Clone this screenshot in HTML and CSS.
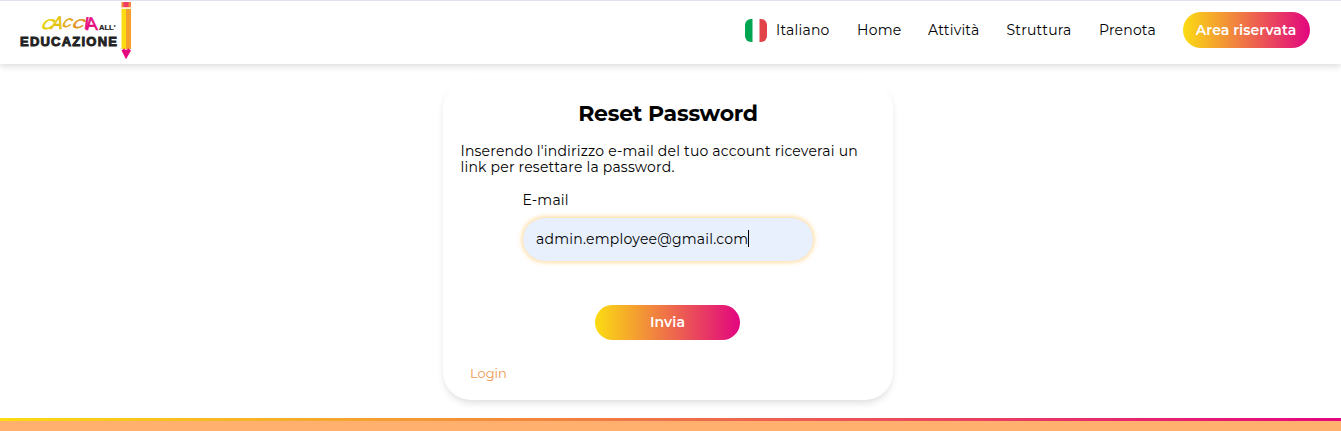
FILE: index.html
```html
<!DOCTYPE html>
<html lang="it">
<head>
<meta charset="utf-8">
<title>Reset Password</title>
<link rel="stylesheet" href="styles.css">
</head>
<body>
<header class="header">
  <a class="logo" aria-label="Caccia all'Educazione">
    <svg width="120" height="60" viewBox="15 0 120 60">
      <g class="logo-brush">
        <text transform="translate(40 28.500) skewX(-28) scale(1.15 1)" font-size="14" fill="#efdc08" stroke="#e3c800">C</text>
        <text transform="translate(50 28.500) skewX(-18) scale(.95 1)" font-size="18" fill="#efd00e" stroke="#dfb800">A</text>
        <text transform="translate(61 27) skewX(-28) scale(1.05 1)" font-size="12" fill="#f3c318" stroke="#dda015">C</text>
        <text transform="translate(71 27.500) skewX(-28) scale(1.3 1)" font-size="12.500" fill="#ef9f24" stroke="#dd8e1a">C</text>
        <text transform="translate(83.500 28.500) skewX(-8)" font-size="17" fill="#e5097f" stroke="#e5097f">I</text>
        <text transform="translate(86 30) skewX(5)" font-size="18" fill="#e5097f" stroke="#e5097f">A</text>
      </g>
      <text class="logo-small" x="99" y="29.800" textLength="16.500" lengthAdjust="spacingAndGlyphs">ALL'</text>
      <text class="logo-word" x="20" y="45.500" textLength="97">EDUCAZIONE</text>
      <path fill="#f5853f" d="M121.500 2h9.500v5.500h-9.500z"/>
      <path fill="#ee3c64" d="M123.500 2h5v5h-5z"/>
      <path fill="#fff3cf" d="M121.500 7.500h9.500v1.500h-9.500z"/>
      <path fill="#fbdc12" d="M121.500 9h5v40h-5z"/>
      <path fill="#f5a02c" d="M126 9h5v40h-5z"/>
      <path fill="#e5097f" d="M121.500 50.500l2.500-2 2 1.500 2.500-1.500 2.500 2-5 8.700z"/>
    </svg>
  </a>
  <nav class="nav">
    <a class="lang">
      <svg width="22" height="23" viewBox="0 0 22 23">
        <path fill="#00a551" d="M7.500 0H6a6 6 0 0 0-6 6v11a6 6 0 0 0 6 6h1.500z"/>
        <path fill="#e24349" d="M14.500 0H16a6 6 0 0 1 6 6v11a6 6 0 0 1-6 6h-1.500z"/>
      </svg>
      <span class="italiano">Italiano</span>
    </a>
    <a class="home">Home</a>
    <a class="attivita">Attività</a>
    <a class="struttura">Struttura</a>
    <a class="prenota">Prenota</a>
    <a class="button area">Area riservata</a>
  </nav>
</header>
<main class="main">
  <form class="card">
    <h1 class="title">Reset Password</h1>
    <p class="intro"><span class="line-one">Inserendo l'indirizzo e-mail del tuo account riceverai un</span><br><span class="line-two">link per resettare la password.</span></p>
    <div class="field">
      <label class="label">E-mail</label>
      <div class="input"><span class="value">admin.employee@gmail.com</span><i class="caret"></i></div>
    </div>
    <a class="button send">Invia</a>
    <a class="login">Login</a>
  </form>
</main>
<footer class="footer"></footer>
</body>
</html>
```
FILE: styles.css
```css
* { box-sizing: border-box; }
body {
  margin: 0;
  height: 431px;
  overflow: hidden;
  display: flex;
  flex-direction: column;
  background: #fff;
  color: #000;
  font: 14px/16px Montserrat, Inter, sans-serif;
}
.header {
  height: 64px;
  flex: none;
  display: flex;
  justify-content: space-between;
  padding: 0 31px 0 15px;
  border-top: 1px solid #dfe1ec;
  box-shadow: 0 3px 6px rgba(0, 0, 0, .12);
}
.logo { margin-top: -1px; }
.logo svg { display: block; }
.logo-brush { font-family: "Liberation Sans", sans-serif; stroke-width: .6; }
.logo-small { font: bold 7.5px "Liberation Sans", sans-serif; fill: #222; stroke: #222; stroke-width: .2; }
.logo-word { font: bold 13px "Liberation Sans", sans-serif; fill: #222; stroke: #222; stroke-width: .9; }
.nav { height: 58px; display: flex; align-items: center; white-space: nowrap; }
.nav a { flex: none; }
.lang { width: 112px; display: flex; align-items: center; gap: 9px; }
.italiano { letter-spacing: .2px; }
.home { width: 71px; letter-spacing: .25px; }
.attivita { width: 78.5px; letter-spacing: .2px; }
.struttura { width: 92.5px; letter-spacing: .2px; }
.prenota { width: 84px; letter-spacing: .2px; }
.button {
  display: flex;
  align-items: center;
  justify-content: center;
  color: #fff;
  font-weight: 600;
  border-radius: 18px;
  background: linear-gradient(90deg, #fbdc12, #e2057f);
}
.area { width: 127px; height: 36px; padding-right: 1px; letter-spacing: .08px; }
.main { flex: 1; padding-top: 16px; }
.card {
  width: 450px;
  height: 320px;
  margin-left: 443px;
  padding: 20px 18px 0;
  display: flex;
  flex-direction: column;
  border-radius: 28px;
  box-shadow: 0 4px 7px -1px rgba(0, 0, 0, .13);
}
.title { margin: 0; font-size: 22px; line-height: 27px; font-weight: 700; letter-spacing: -.25px; text-align: center; white-space: nowrap; }
.intro { margin: 16px 0 0 -.5px; white-space: nowrap; }
.line-one { letter-spacing: .2px; }
.line-two { letter-spacing: .2px; }
.field { width: 290px; margin: 17px 0 0 62px; }
.label { display: block; letter-spacing: .2px; margin-left: -.5px; }
.input {
  height: 43px;
  margin-top: 10px;
  padding: 0 0 2px 13px;
  display: flex;
  align-items: center;
  border-radius: 22px;
  background: #e8f0fe;
  box-shadow: 0 0 5px 1px #ffd58c;
}
.value { letter-spacing: .23px; }
.caret { width: 1px; height: 17px; background: #000; }
.send { width: 145px; height: 35px; margin: 44px 0 0 134px; padding-bottom: 2px; letter-spacing: .1px; }
.login { margin: 25px 0 0 9px; font-size: 13px; color: #ee974f; }
.footer {
  height: 13px;
  flex: none;
  border-top: 3px solid;
  border-image: linear-gradient(90deg, #fbdc12, #e2057f) 1;
  background: #ffb06f;
}
```
